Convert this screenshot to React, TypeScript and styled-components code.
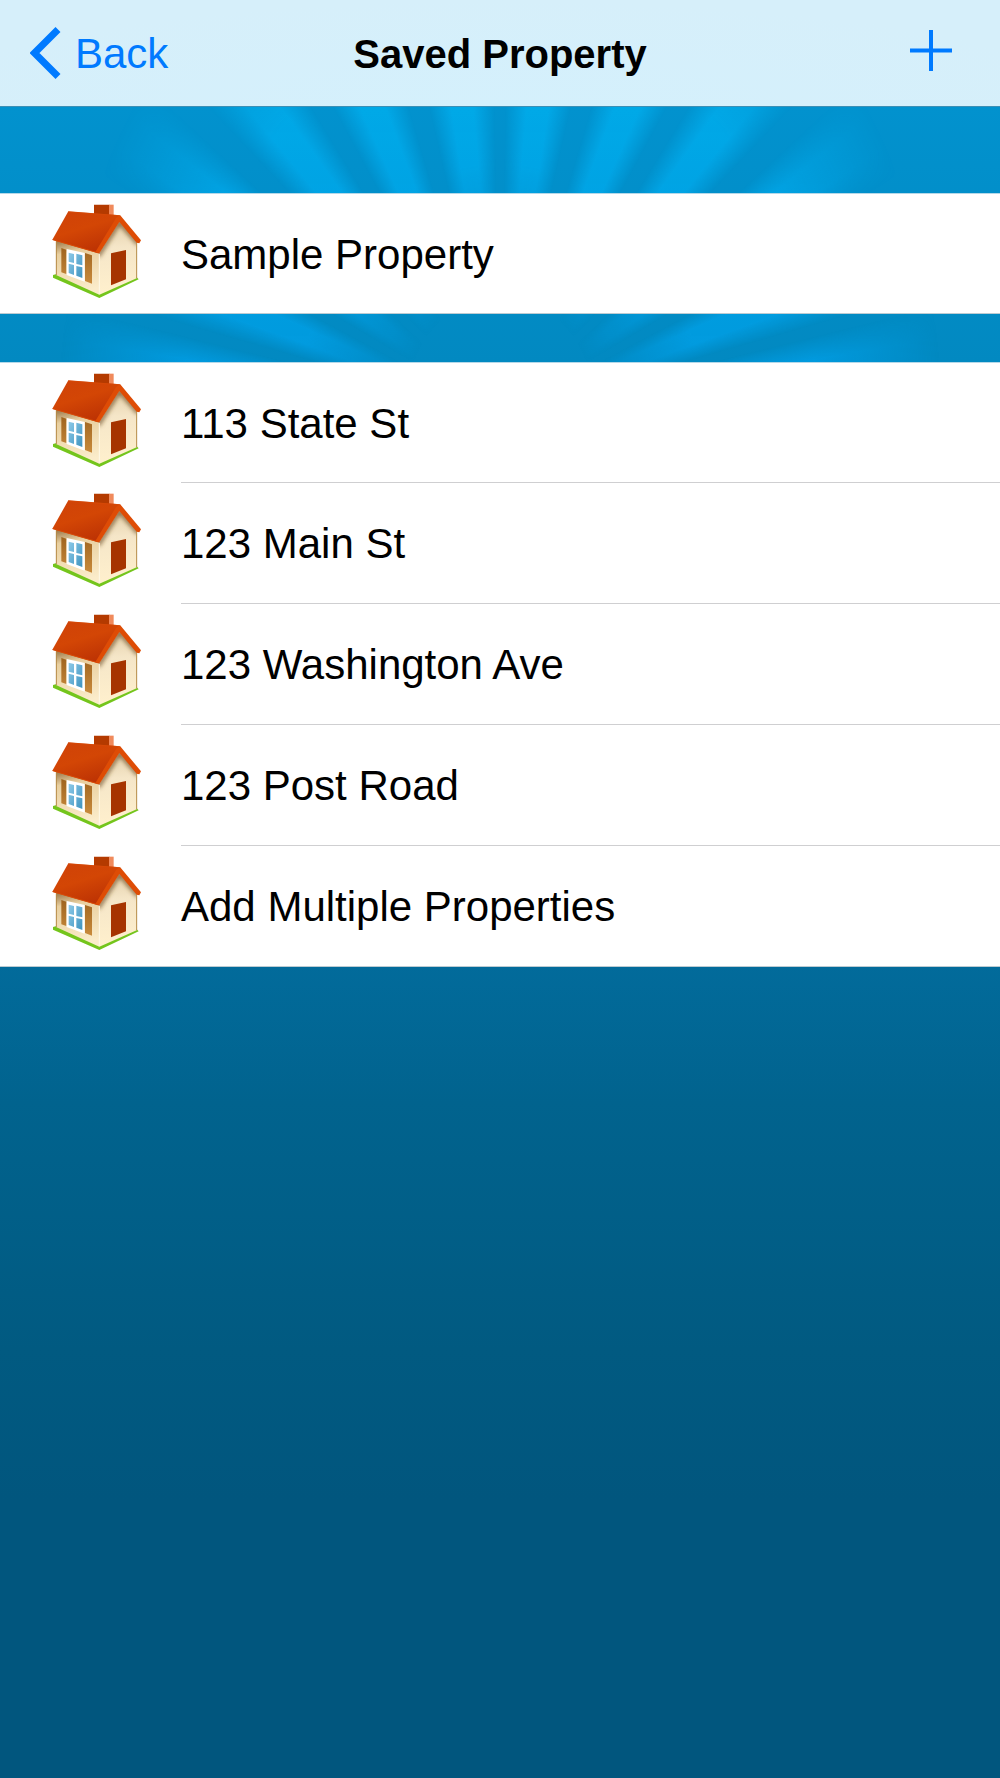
import React from 'react';
import styled, { createGlobalStyle } from 'styled-components';

const GlobalStyle = createGlobalStyle`
  *, *::before, *::after { box-sizing: border-box; }
  html { background: #01567e; }
  body {
    margin: 0;
    font-family: "Liberation Sans", Arial, Helvetica, sans-serif;
    font-size: 42px;
    line-height: 48px;
    color: #000;
  }
`;

// Centre angle of each light ray, in degrees away from vertical.
const rayAngles = [-82, -68, -53, -37.5, -22.5, -7, 7, 22.5, 37.5, 53, 68, 82];
const rayStops = rayAngles
  .map((angle) => {
    const a = angle + 100;
    return `transparent ${a - 6}deg, #000 ${a - 2}deg, #000 ${a + 2}deg, transparent ${a + 6}deg`;
  })
  .join(', ');

const Page = styled.div`
  position: relative;
  isolation: isolate;
  min-height: 100vh;
  background: linear-gradient(
    #0294d2 0,
    #0292ce 107px,
    #0289c1 362px,
    #026b9b 966px,
    #01638e 1103px,
    #015a81 1350px,
    #01567e 1500px
  );

  &::before {
    content: "";
    position: absolute;
    z-index: -1;
    inset: 0 0 auto;
    height: 415px;
    background: linear-gradient(rgba(0, 190, 255, 0.52) 107px, rgba(0, 170, 250, 0.5) 362px);
    mask-image:
      conic-gradient(from -100deg at 50% 100%, ${rayStops}),
      radial-gradient(
        480px 600px at 50% 100%,
        transparent 20%,
        #000 42%,
        #000 66%,
        transparent 92%
      );
    mask-composite: intersect;
  }
`;

const NavBar = styled.header`
  display: grid;
  grid-template-columns: 1fr auto 1fr;
  align-items: center;
  height: 107px;
  padding: 0 48px 0 30px;
  background: radial-gradient(60% 100% at 50% 100%, #d4f0fc, #d6effa);
  border-bottom: 1px solid #3c8fb5;
`;

const BackLink = styled.a`
  justify-self: start;
  display: flex;
  align-items: center;
  gap: 13px;
  color: #007aff;
  text-decoration: none;
`;

const BackText = styled.span`
  padding-top: 2px;
`;

const Title = styled.h1`
  margin: 0 0 0 18px;
  padding-top: 2px;
  font-size: 40px;
  font-weight: 700;
`;

const AddButton = styled.button`
  justify-self: end;
  display: flex;
  padding: 0;
  border: 0;
  background: none;
  color: #007aff;
  cursor: pointer;
`;

const Groups = styled.main`
  display: flex;
  flex-direction: column;
  gap: 48px;
  padding-top: 86px;
`;

const Group = styled.ul`
  margin: 0;
  padding: 0;
  list-style: none;
  background: #fff;
`;

const Label = styled.span`
  flex: 1;
  display: flex;
  align-items: center;
  padding-top: 2px;
  border-bottom: 1px solid #cfcfd1;
`;

const Item = styled.li`
  display: flex;
  height: 121px;

  &:first-child { border-top: 1px solid #b5d8e8; }
  &:last-child { border-bottom: 1px solid #bccbd2; }
  &:last-child ${Label} { border-bottom: 0; }
`;

const ItemButton = styled.button`
  flex: 1;
  display: flex;
  gap: 39px;
  padding: 0 0 0 52px;
  border: 0;
  background: none;
  color: inherit;
  font: inherit;
  text-align: left;
  cursor: pointer;
`;

const HouseIcon = styled.svg`
  flex: none;
  width: 90px;
  height: 94px;
  margin-top: 10px;
`;

const HouseDefs = styled.svg`
  display: block;
  width: 0;
  height: 0;
  position: absolute;
`;

function HouseArtwork() {
  return (
    <HouseDefs aria-hidden="true">
      <defs>
        <linearGradient id="roof" x1="0" y1="0" x2="0.5" y2="1">
          <stop offset="0" stopColor="#cf4208" />
          <stop offset="0.5" stopColor="#d34605" />
          <stop offset="1" stopColor="#bd3304" />
        </linearGradient>
        <linearGradient id="sideWall" x1="0" y1="0" x2="0.15" y2="1">
          <stop offset="0" stopColor="#8f6b3d" />
          <stop offset="0.28" stopColor="#e8cf9f" />
          <stop offset="1" stopColor="#fbecca" />
        </linearGradient>
        <linearGradient id="frontWall" x1="0" y1="0" x2="0" y2="1">
          <stop offset="0" stopColor="#e3d0ab" />
          <stop offset="0.35" stopColor="#f5e6c8" />
          <stop offset="1" stopColor="#fff0cd" />
        </linearGradient>
        <linearGradient id="shutter" x1="0" y1="0" x2="0" y2="1">
          <stop offset="0" stopColor="#9f641f" />
          <stop offset="1" stopColor="#c98b3c" />
        </linearGradient>
        <linearGradient id="pane" x1="0" y1="0" x2="1" y2="1">
          <stop offset="0" stopColor="#8cc9e8" />
          <stop offset="1" stopColor="#3f94bf" />
        </linearGradient>
        <clipPath id="gable">
          <path d="M177 187 L238 92 L290 152 L290 266 L178 315 Z" />
        </clipPath>
        <filter id="eaves" x="-30%" y="-30%" width="160%" height="160%">
          <feGaussianBlur stdDeviation="6" />
        </filter>
        <symbol id="house" viewBox="36 40 270 282">
          <path d="M39 253 L50 250 L178 306 L290 260 L296 266 L178 322 L39 261 Z" fill="#74c51c" />
          <path d="M48 145 L178 180 L178 312 L48 253 Z" fill="url(#sideWall)" />
          <path d="M177 187 L238 92 L290 152 L290 263 L178 312 Z" fill="url(#frontWall)" />
          <g clipPath="url(#gable)">
            <path d="M174 196 L238 94 L296 160" fill="none" stroke="#6b4a24" strokeOpacity="0.75" strokeWidth="13" filter="url(#eaves)" />
          </g>
          <path d="M49 150 L49 253 M290 154 L290 263" stroke="#b58a45" strokeWidth="3" />
          <path d="M178 190 L178 311" stroke="#fff8e4" strokeWidth="3" />
          <path d="M64 172 L79 177 L79 250 L64 245 Z M135 187 L156 194 L156 279 L135 271 Z" fill="url(#shutter)" />
          <path d="M80 175 L134 187 L134 273 L80 253 Z" fill="#fff" />
          <path
            d="M86 186 L102 190 L102 217 L86 213 Z M109 189 L127 194 L127 224 L109 220 Z M86 219 L102 223 L102 253 L86 247 Z M109 226 L127 230 L127 262 L109 255 Z"
            fill="url(#pane)"
          />
          <path d="M213 188 L258 178 L258 266 L213 284 Z" fill="#a63400" />
          <path d="M162 42 L208 42 L208 76 L162 70 Z" fill="#b43a00" />
          <path d="M207 42 L221 42 L221 76 L207 76 Z" fill="#f08a5c" />
          <path d="M85 62 L240 74 L176 188 L37 147 Z" fill="url(#roof)" />
          <path d="M85 64 L238 75" stroke="#d84a06" strokeWidth="2" />
          <path d="M38 147 L176 187" stroke="#d84a06" strokeWidth="3" />
          <path d="M240 73 L303 149 L298 158 L290 156 L238 94 L178 188 L166 184 L228 82 Z" fill="#de4c05" />
        </symbol>
      </defs>
    </HouseDefs>
  );
}

const groups = [
  ['Sample Property'],
  ['113 State St', '123 Main St', '123 Washington Ave', '123 Post Road', 'Add Multiple Properties'],
];

export default function App() {
  return (
    <Page>
      <GlobalStyle />
      <HouseArtwork />
      <NavBar>
        <BackLink href="#back">
          <svg width="32" height="52" viewBox="0 0 32 52" aria-hidden="true">
            <path d="M28 2.5 L4.5 26 L28 49.5" fill="none" stroke="currentColor" strokeWidth="7" />
          </svg>
          <BackText>Back</BackText>
        </BackLink>
        <Title>Saved Property</Title>
        <AddButton type="button" aria-label="Add property">
          <svg width="42" height="48" viewBox="0 0 42 48" aria-hidden="true">
            <path d="M21 1 V42 M0 21.5 H42" fill="none" stroke="currentColor" strokeWidth="4" />
          </svg>
        </AddButton>
      </NavBar>
      <Groups>
        {groups.map((names) => (
          <Group key={names[0]}>
            {names.map((name) => (
              <Item key={name}>
                <ItemButton type="button">
                  <HouseIcon aria-hidden="true">
                    <use href="#house" />
                  </HouseIcon>
                  <Label>{name}</Label>
                </ItemButton>
              </Item>
            ))}
          </Group>
        ))}
      </Groups>
    </Page>
  );
}
